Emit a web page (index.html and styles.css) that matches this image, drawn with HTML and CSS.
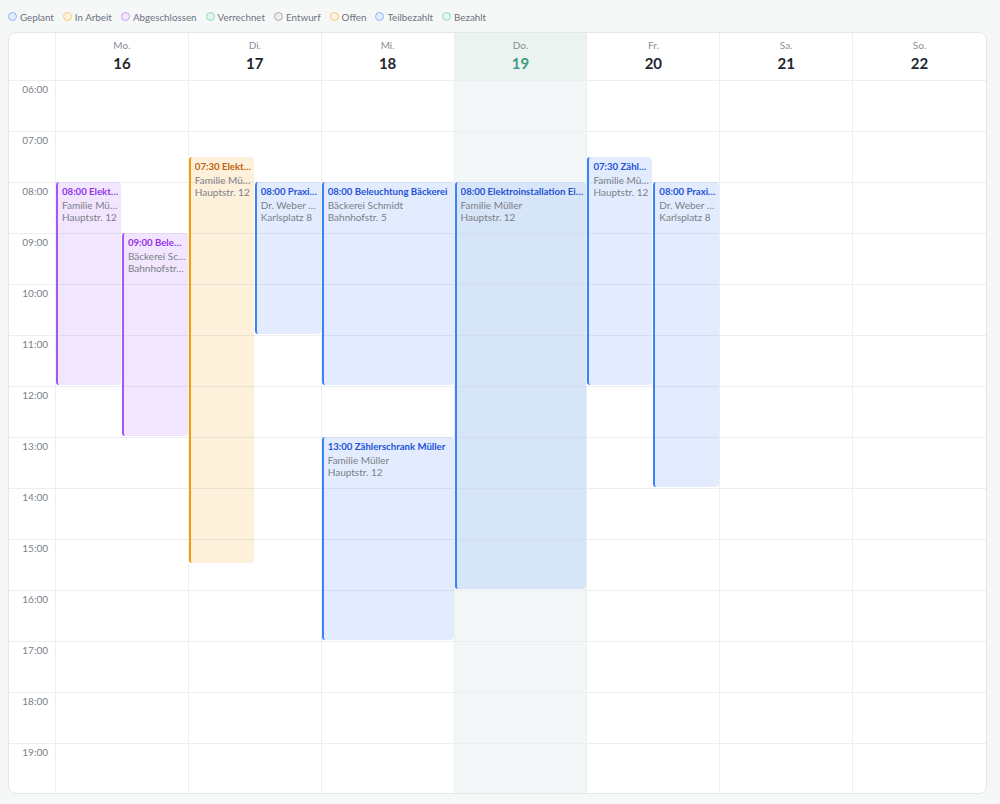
FILE: index.html
```html
<!DOCTYPE html>
<html lang="de">
<head>
<meta charset="utf-8">
<title>Wochenkalender</title>
<link rel="stylesheet" href="styles.css">
</head>
<body>
<div class="legend">
  <span class="lg"><i class="dot d-blue"></i>Geplant</span>
  <span class="lg"><i class="dot d-orange"></i>In Arbeit</span>
  <span class="lg"><i class="dot d-purple"></i>Abgeschlossen</span>
  <span class="lg"><i class="dot d-green"></i>Verrechnet</span>
  <span class="lg"><i class="dot d-gray"></i>Entwurf</span>
  <span class="lg"><i class="dot d-orange"></i>Offen</span>
  <span class="lg"><i class="dot d-blue"></i>Teilbezahlt</span>
  <span class="lg"><i class="dot d-green"></i>Bezahlt</span>
</div>
<div class="card">
  <div class="head">
    <div class="corner"></div>
    <div class="dh"><span class="dn">Mo.</span><span class="dd">16</span></div>
    <div class="dh"><span class="dn">Di.</span><span class="dd">17</span></div>
    <div class="dh"><span class="dn">Mi.</span><span class="dd">18</span></div>
    <div class="dh today"><span class="dn">Do.</span><span class="dd">19</span></div>
    <div class="dh"><span class="dn">Fr.</span><span class="dd">20</span></div>
    <div class="dh"><span class="dn">Sa.</span><span class="dd">21</span></div>
    <div class="dh last"><span class="dn">So.</span><span class="dd">22</span></div>
  </div>
  <div class="body">
    <div class="times">
      <div class="tl">06:00</div><div class="tl">07:00</div><div class="tl">08:00</div><div class="tl">09:00</div>
      <div class="tl">10:00</div><div class="tl">11:00</div><div class="tl">12:00</div><div class="tl">13:00</div>
      <div class="tl">14:00</div><div class="tl">15:00</div><div class="tl">16:00</div><div class="tl">17:00</div>
      <div class="tl">18:00</div><div class="tl">19:00</div>
    </div>
    <div class="day">
      <div class="slots"><div></div><div></div><div></div><div></div><div></div><div></div><div></div><div></div><div></div><div></div><div></div><div></div><div></div><div></div></div>
      <div class="ev purple half-l" style="top:101px;height:203px"><b>08:00 Elektroinstallation Müller</b><span>Familie Müller</span><span>Hauptstr. 12</span></div>
      <div class="ev purple half-r" style="top:152px;height:203px"><b>09:00 Beleuchtung Bäckerei</b><span>Bäckerei Schmidt</span><span>Bahnhofstr. 5</span></div>
    </div>
    <div class="day">
      <div class="slots"><div></div><div></div><div></div><div></div><div></div><div></div><div></div><div></div><div></div><div></div><div></div><div></div><div></div><div></div></div>
      <div class="ev orange half-l" style="top:76px;height:406px"><b>07:30 Elektroinstallation Müller</b><span>Familie Müller</span><span>Hauptstr. 12</span></div>
      <div class="ev blue half-r" style="top:101px;height:152px"><b>08:00 Praxis Dr. Weber</b><span>Dr. Weber Praxis</span><span>Karlsplatz 8</span></div>
    </div>
    <div class="day">
      <div class="slots"><div></div><div></div><div></div><div></div><div></div><div></div><div></div><div></div><div></div><div></div><div></div><div></div><div></div><div></div></div>
      <div class="ev blue full" style="top:101px;height:203px"><b>08:00 Beleuchtung Bäckerei</b><span>Bäckerei Schmidt</span><span>Bahnhofstr. 5</span></div>
      <div class="ev blue full" style="top:356px;height:203px"><b>13:00 Zählerschrank Müller</b><span>Familie Müller</span><span>Hauptstr. 12</span></div>
    </div>
    <div class="day today">
      <div class="slots"><div></div><div></div><div></div><div></div><div></div><div></div><div></div><div></div><div></div><div></div><div></div><div></div><div></div><div></div></div>
      <div class="ev blue full" style="top:101px;height:407px"><b>08:00 Elektroinstallation Einfamilienhaus</b><span>Familie Müller</span><span>Hauptstr. 12</span></div>
    </div>
    <div class="day">
      <div class="slots"><div></div><div></div><div></div><div></div><div></div><div></div><div></div><div></div><div></div><div></div><div></div><div></div><div></div><div></div></div>
      <div class="ev blue half-l" style="top:76px;height:228px"><b>07:30 Zählerschrank Müller</b><span>Familie Müller</span><span>Hauptstr. 12</span></div>
      <div class="ev blue half-r" style="top:101px;height:305px"><b>08:00 Praxis Dr. Weber</b><span>Dr. Weber Praxis</span><span>Karlsplatz 8</span></div>
    </div>
    <div class="day">
      <div class="slots"><div></div><div></div><div></div><div></div><div></div><div></div><div></div><div></div><div></div><div></div><div></div><div></div><div></div><div></div></div>
    </div>
    <div class="day last">
      <div class="slots"><div></div><div></div><div></div><div></div><div></div><div></div><div></div><div></div><div></div><div></div><div></div><div></div><div></div><div></div></div>
    </div>
  </div>
</div>
</body>
</html>
```

FILE: styles.css
```css
* { box-sizing: border-box; }
html, body { margin: 0; padding: 0; }
body {
  background: #f6f8f8;
  font-family: Lato, "Open Sans", sans-serif;
  color: #1f2937;
  padding: 8px;
  width: 1000px;
  height: 804px;
  overflow: hidden;
}
.legend {
  display: flex;
  align-items: center;
  gap: 9px;
  height: 17px;
  margin-bottom: 7px;
  font-size: 9.8px;
  color: #6b7280;
}
.lg { display: flex; align-items: center; gap: 3px; }
.dot {
  display: inline-block;
  width: 9px;
  height: 9px;
  border-radius: 50%;
  border: 1.3px solid;
}
.d-blue { border-color: #93b4f6; background: #e3ebfd; }
.d-orange { border-color: #f8c77d; background: #fef3e1; }
.d-purple { border-color: #c9a0f7; background: #f3e8fe; }
.d-green { border-color: #8fd9bd; background: #e2f6ee; }
.d-gray { border-color: #a7abb2; background: #eceef0; }

.card {
  width: 979px;
  background: #fff;
  border: 1px solid #e4e7e9;
  border-radius: 8px;
  overflow: hidden;
}
.head {
  display: grid;
  grid-template-columns: 47px repeat(7, 1fr);
  height: 48px;
  border-bottom: 1px solid #eceeef;
}
.corner { border-right: 1px solid #eceeef; }
.dh {
  display: flex;
  flex-direction: column;
  align-items: center;
  padding-top: 6px;
  border-right: 1px solid #eceeef;
}
.dh.last { border-right: none; }
.dn { font-size: 10px; color: #8a8f96; line-height: 13px; }
.dd { font-size: 15px; font-weight: 700; color: #1f2630; line-height: 20px; margin-top: 1px; }
.dh.today { background: #eaf3f0; }
.dh.today .dd { color: #3f9a85; }

.body {
  display: grid;
  grid-template-columns: 47px repeat(7, 1fr);
  height: 712px;
  overflow: hidden;
}
.times { border-right: 1px solid #eceeef; }
.tl {
  height: 51px;
  border-bottom: 1px solid #eceeef;
  font-size: 10px;
  color: #7b8087;
  text-align: right;
  padding: 1px 7px 0 0;
  line-height: 14px;
}
.day {
  position: relative;
  border-right: 1px solid #eceeef;
}
.day.last { border-right: none; }
.day.today { background: #f3f7f8; }
.slots div {
  height: 51px;
  border-bottom: 1px solid #eceeef;
}
.ev {
  position: absolute;
  border-left: 2px solid;
  border-radius: 3px 4px 4px 3px;
  padding: 4px 2px 0 4px;
  display: flex;
  flex-direction: column;
  font-size: 10px;
  line-height: 12.7px;
  overflow: hidden;
}
.ev b, .ev span {
  white-space: nowrap;
  overflow: hidden;
  text-overflow: ellipsis;
}
.ev b { font-weight: 700; font-size: 9.6px; }
.ev span { color: #7a7f87; }
.half-l { left: 0; width: calc(50% - 1px); }
.half-r { left: calc(50%); right: 0; }
.full { left: 0; right: 0; }
.purple { background: rgba(168, 85, 247, 0.15); border-color: #a855f7; }
.purple b { color: #9333ea; }
.orange { background: rgba(245, 158, 11, 0.15); border-color: #f59e0b; }
.orange b { color: #c2610c; }
.blue { background: rgba(59, 130, 246, 0.15); border-color: #3b82f6; }
.blue b { color: #2552d8; }
```
